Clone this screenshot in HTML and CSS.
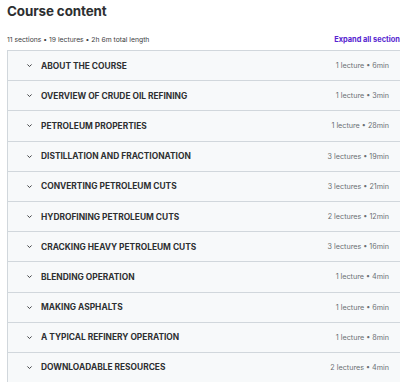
FILE: index.html
```html
<!DOCTYPE html>
<html lang="en">
<head>
  <meta charset="UTF-8">
  <meta name="viewport" content="width=device-width, initial-scale=1.0">
  <title>Course content</title>
  <link rel="stylesheet" href="styles.css">
</head>
<body>
  <div class="course">
    <h2 class="title">Course content</h2>

    <div class="meta">
      <span>11 sections • 19 lectures • 2h 6m total length</span>
      <button class="expand">Expand all sections</button>
    </div>

    <div class="sections">
      <div class="section">
        <svg class="chev" viewBox="0 0 10 10"><path d="M2 3.5 L5 6.5 L8 3.5"/></svg>
        <span class="name">About the course</span>
        <span class="info">1 lecture • 6min</span>
      </div>
      <div class="section">
        <svg class="chev" viewBox="0 0 10 10"><path d="M2 3.5 L5 6.5 L8 3.5"/></svg>
        <span class="name">Overview of crude oil refining</span>
        <span class="info">1 lecture • 3min</span>
      </div>
      <div class="section">
        <svg class="chev" viewBox="0 0 10 10"><path d="M2 3.5 L5 6.5 L8 3.5"/></svg>
        <span class="name">Petroleum properties</span>
        <span class="info">1 lecture • 28min</span>
      </div>
      <div class="section">
        <svg class="chev" viewBox="0 0 10 10"><path d="M2 3.5 L5 6.5 L8 3.5"/></svg>
        <span class="name">Distillation and fractionation</span>
        <span class="info">3 lectures • 19min</span>
      </div>
      <div class="section">
        <svg class="chev" viewBox="0 0 10 10"><path d="M2 3.5 L5 6.5 L8 3.5"/></svg>
        <span class="name">Converting petroleum cuts</span>
        <span class="info">3 lectures • 21min</span>
      </div>
      <div class="section">
        <svg class="chev" viewBox="0 0 10 10"><path d="M2 3.5 L5 6.5 L8 3.5"/></svg>
        <span class="name">Hydrofining petroleum cuts</span>
        <span class="info">2 lectures • 12min</span>
      </div>
      <div class="section">
        <svg class="chev" viewBox="0 0 10 10"><path d="M2 3.5 L5 6.5 L8 3.5"/></svg>
        <span class="name">Cracking heavy petroleum cuts</span>
        <span class="info">3 lectures • 16min</span>
      </div>
      <div class="section">
        <svg class="chev" viewBox="0 0 10 10"><path d="M2 3.5 L5 6.5 L8 3.5"/></svg>
        <span class="name">Blending operation</span>
        <span class="info">1 lecture • 4min</span>
      </div>
      <div class="section">
        <svg class="chev" viewBox="0 0 10 10"><path d="M2 3.5 L5 6.5 L8 3.5"/></svg>
        <span class="name">Making asphalts</span>
        <span class="info">1 lecture • 6min</span>
      </div>
      <div class="section">
        <svg class="chev" viewBox="0 0 10 10"><path d="M2 3.5 L5 6.5 L8 3.5"/></svg>
        <span class="name">A typical refinery operation</span>
        <span class="info">1 lecture • 8min</span>
      </div>
      <div class="section">
        <svg class="chev" viewBox="0 0 10 10"><path d="M2 3.5 L5 6.5 L8 3.5"/></svg>
        <span class="name">Downloadable resources</span>
        <span class="info">2 lectures • 4min</span>
      </div>
    </div>
  </div>
</body>
</html>
```

FILE: styles.css
```css
html, body {
  margin: 0;
  overflow: hidden;
  background: #fff;
}
body {
  font-family: Inter, "Noto Sans", sans-serif;
  color: #2d2f31;
}
.course {
  width: 397px;
  padding-left: 7px;
}
.title {
  margin: 0;
  padding-top: 2px;
  font-size: 13.4px;
  line-height: 18px;
  font-weight: 700;
  letter-spacing: -0.1px;
}
.meta {
  display: flex;
  justify-content: space-between;
  align-items: center;
  margin-top: 10px;
  height: 18px;
  font-size: 6.8px;
  color: #3e4143;
}
.expand {
  border: none;
  background: none;
  padding: 0;
  font-family: inherit;
  font-size: 7.4px;
  font-weight: 700;
  color: #5624d0;
  white-space: nowrap;
}
.sections {
  margin-top: 2px;
  border: 1px solid #d1d7dc;
  border-bottom: none;
}
.section {
  display: flex;
  align-items: center;
  box-sizing: border-box;
  height: 30.2px;
  padding: 0 14px 0 18px;
  background: #f7f9fa;
  border-bottom: 1px solid #d1d7dc;
}
.chev {
  width: 7px;
  height: 7px;
  fill: none;
  stroke: #3e4143;
  stroke-width: 1.4;
  margin-right: 8px;
}
.name {
  flex: 1;
  font-size: 8.4px;
  font-weight: 700;
  text-transform: uppercase;
  color: #2d2f31;
}
.info {
  font-size: 7.2px;
  color: #6a6f73;
}
```
